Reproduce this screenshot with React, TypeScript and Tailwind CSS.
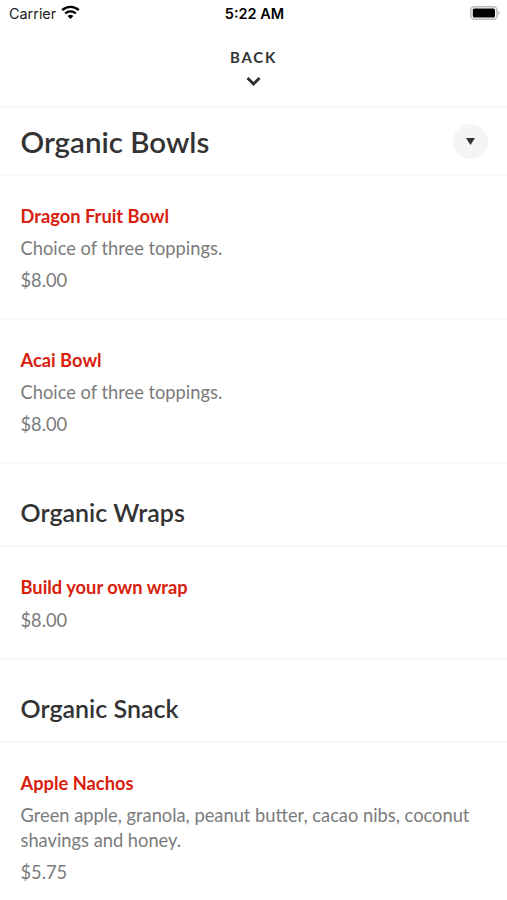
import React from "react";

type MenuItem = {
  name: string;
  description?: string;
  price: string;
};

const bowls: MenuItem[] = [
  {
    name: "Dragon Fruit Bowl",
    description: "Choice of three toppings.",
    price: "$8.00",
  },
  {
    name: "Acai Bowl",
    description: "Choice of three toppings.",
    price: "$8.00",
  },
];

const wraps: MenuItem[] = [{ name: "Build your own wrap", price: "$8.00" }];

const snacks: MenuItem[] = [
  {
    name: "Apple Nachos",
    description:
      "Green apple, granola, peanut butter, cacao nibs, coconut shavings and honey.",
    price: "$5.75",
  },
];

const StatusBar = () => (
  <div className="grid h-7 grid-cols-3 items-center pl-[9px] pr-[7px] font-['Inter',sans-serif] text-black">
    <div className="flex items-center gap-[5px] text-[14.4px] text-[#222]">
      <span>Carrier</span>
      <svg className="mb-0.5" width="19" height="15" viewBox="0 0 19 15">
        <path
          d="M1.200 5.200a12 12 0 0 1 16.600 0M4.200 8.500a7.700 7.700 0 0 1 10.600 0"
          fill="none"
          stroke="#000"
          strokeWidth="2.4"
        />
        <path d="M9.500 14 6.600 11.100a4.200 4.200 0 0 1 5.800 0z" fill="#000" />
      </svg>
    </div>
    <span className="text-center text-[14.5px] font-semibold">5:22 AM</span>
    <svg className="mb-0.5 justify-self-end" width="30" height="14" viewBox="0 0 30 14">
      <rect x="0.8" y="0.8" width="26.2" height="12.4" rx="3.5" fill="none" stroke="#bbb" strokeWidth="1.5" />
      <rect x="2.800" y="2.4" width="22.2" height="9.2" rx="1.5" fill="#000" />
      <path d="M28.200 4.800v4.400c1.800-.8 1.800-3.600 0-4.400z" fill="#bbb" />
    </svg>
  </div>
);

const Item: React.FC<{ item: MenuItem }> = ({ item }) => (
  <div className="border-b-2 border-[#f7f7f7] px-[20.5px] pb-[25px] pt-[27px] text-[18.3px]">
    <h3 className="h-[27px] font-bold leading-[27px] text-[#d8200d]">{item.name}</h3>
    {item.description && (
      <p className="mt-[6px] leading-[25px] text-[#7b7b7b]">{item.description}</p>
    )}
    <p className="mt-[6px] leading-[26px] text-[#7b7b7b]">{item.price}</p>
  </div>
);

const SectionTitle: React.FC<{ title: string }> = ({ title }) => (
  <h2 className="h-[83px] border-b-2 border-[#f7f7f7] px-[20.5px] pt-[30px] text-[25px] font-semibold leading-[37px]">
    {title}
  </h2>
);

export default function App() {
  return (
    <div className="h-[900px] w-full overflow-hidden bg-white font-['Lato',sans-serif] text-[#333]">
      <StatusBar />
      <button className="flex h-20 w-full flex-col items-center border-b-2 border-[#f7f7f7] pt-[19px]">
        <span className="text-[15px] font-bold leading-[20px] tracking-[1.8px]">BACK</span>
        <svg className="mr-px mt-[9px]" width="15" height="11" viewBox="0 0 15 11">
          <path d="m1.500 2 6 6 6-6" fill="none" stroke="currentColor" strokeWidth="3" />
        </svg>
      </button>
      <div className="flex h-[68px] items-center justify-between border-b-2 border-[#f7f7f7] pl-[20.5px] pr-[19px]">
        <h1 className="pt-px text-[29.5px] font-semibold leading-[44px]">Organic Bowls</h1>
        <button className="flex size-[35px] items-center justify-center rounded-full bg-[#f5f5f5]">
          <svg width="9" height="7" viewBox="0 0 9 7">
            <path d="M0 0h9L4.500 7z" fill="currentColor" />
          </svg>
        </button>
      </div>
      {bowls.map((item) => (
        <Item key={item.name} item={item} />
      ))}
      <SectionTitle title="Organic Wraps" />
      {wraps.map((item) => (
        <Item key={item.name} item={item} />
      ))}
      <SectionTitle title="Organic Snack" />
      {snacks.map((item) => (
        <Item key={item.name} item={item} />
      ))}
    </div>
  );
}
